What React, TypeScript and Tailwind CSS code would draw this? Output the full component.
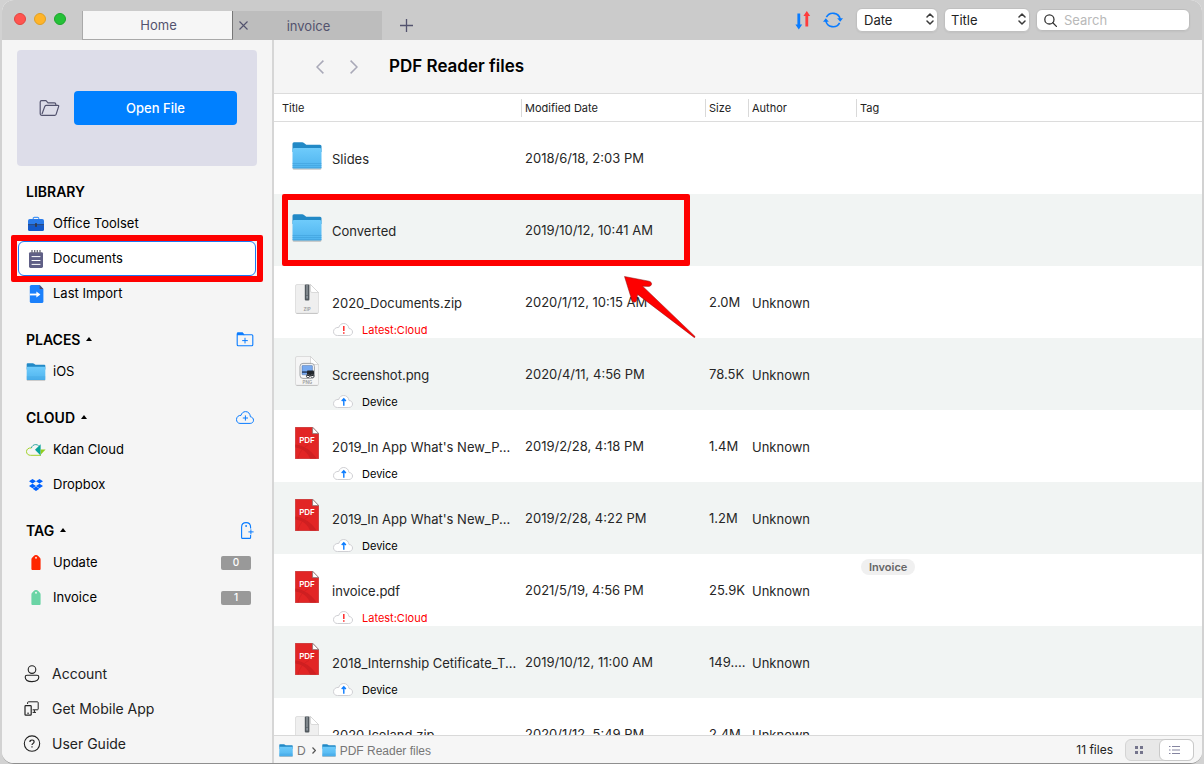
import { useState } from "react";
import type { ReactNode } from "react";

type Kind = "folder" | "zip" | "png" | "pdf";

interface FileItem {
  kind: Kind;
  name: string;
  date: string;
  size?: string;
  author?: string;
  tag?: string;
  status?: "Device" | "Latest:Cloud";
  marked?: boolean;
}

const FILES: FileItem[] = [
  { kind: "folder", name: "Slides", date: "2018/6/18, 2:03 PM" },
  { kind: "folder", name: "Converted", date: "2019/10/12, 10:41 AM", marked: true },
  { kind: "zip", name: "2020_Documents.zip", date: "2020/1/12, 10:15 AM", size: "2.0M", author: "Unknown", status: "Latest:Cloud" },
  { kind: "png", name: "Screenshot.png", date: "2020/4/11, 4:56 PM", size: "78.5K", author: "Unknown", status: "Device" },
  { kind: "pdf", name: "2019_In App What's New_P...", date: "2019/2/28, 4:18 PM", size: "1.4M", author: "Unknown", status: "Device" },
  { kind: "pdf", name: "2019_In App What's New_P...", date: "2019/2/28, 4:22 PM", size: "1.2M", author: "Unknown", status: "Device" },
  { kind: "pdf", name: "invoice.pdf", date: "2021/5/19, 4:56 PM", size: "25.9K", author: "Unknown", tag: "Invoice", status: "Latest:Cloud" },
  { kind: "pdf", name: "2018_Internship Cetificate_T...", date: "2019/10/12, 11:00 AM", size: "149....", author: "Unknown", status: "Device" },
  { kind: "zip", name: "2020 Iceland.zip", date: "2020/1/12, 5:49 PM", size: "2.4M", author: "Unknown" },
];

const COLUMNS = ["Title", "Modified Date", "Size", "Author", "Tag"];

function FolderIcon({ className }: { className: string }) {
  return (
    <svg className={className} viewBox="0 0 30 28" aria-hidden="true">
      <defs>
        <linearGradient id="folderFront" x1="0" y1="0" x2="0" y2="1">
          <stop offset="0" stopColor="#6ecbfb" />
          <stop offset="1" stopColor="#4fb4ef" />
        </linearGradient>
      </defs>
      <rect x="0.6" y="25" width="28.8" height="2.8" rx="1.4" fill="#000" opacity="0.22" />
      <path d="M0.5 1.8Q0.5 0.3 2 0.3H10.2Q11.2 0.3 12 1L13.6 2.3Q14.2 2.8 15.2 2.8H28Q29.5 2.8 29.5 4.3V10H0.5Z" fill="#2289c6" />
      <path d="M0.5 7.5Q0.5 6 2 6H28Q29.5 6 29.5 7.5V25.2Q29.5 26.4 28.3 26.4H1.7Q0.5 26.4 0.5 25.2Z" fill="url(#folderFront)" />
      <path d="M0.5 21.5H29.5M0.5 23.5H29.5M0.5 25.6H29.5" stroke="#3a9bd6" strokeWidth="0.5" />
    </svg>
  );
}

function ZipIcon() {
  return (
    <svg className="h-[30px] w-6" viewBox="0 0 24 30" aria-hidden="true">
      <path d="M2 0.5H15.5L23.5 8.5V28Q23.5 29.5 22 29.5H2Q0.5 29.5 0.5 28V2Q0.5 0.5 2 0.5Z" fill="#efefef" stroke="#d9d9d9" strokeWidth="0.8" />
      <path d="M1.5 29.4H22.5" stroke="#bdbdbd" strokeWidth="0.8" />
      <path d="M15.5 0.5V7Q15.5 8.5 17 8.5H23.5Z" fill="#fff" stroke="#c6c6c6" strokeWidth="0.6" />
      <rect x="9.8" y="0.4" width="4.6" height="16" rx="1" fill="#51585e" />
      <path d="M11 2H13M11 4H13M11 6H13M11 8H13M11 10H13" stroke="#b7bec3" strokeWidth="0.9" />
      <rect x="11.2" y="11.6" width="1.8" height="3" fill="#89929a" />
      <text x="12" y="27.4" textAnchor="middle" fontSize="4.5" fontWeight="600" fill="#999">ZIP</text>
    </svg>
  );
}

function PngIcon() {
  return (
    <svg className="h-[30px] w-6" viewBox="0 0 24 30" aria-hidden="true">
      <path d="M2 0.5H15.5L23.5 8.5V28Q23.5 29.5 22 29.5H2Q0.5 29.5 0.5 28V2Q0.5 0.5 2 0.5Z" fill="#f5f5f5" stroke="#d6d6d6" strokeWidth="0.8" />
      <path d="M1.5 29.4H22.5" stroke="#b9b9b9" strokeWidth="0.8" />
      <path d="M15.5 0.5V7Q15.5 8.5 17 8.5H23.5Z" fill="#fff" stroke="#c6c6c6" strokeWidth="0.6" />
      <rect x="5" y="7.4" width="14.4" height="15" rx="3" fill="#fafafa" stroke="#8b8f93" strokeWidth="0.8" />
      <rect x="7" y="9.4" width="10.4" height="9.4" rx="0.6" fill="#78aaf0" stroke="#44679c" strokeWidth="0.5" />
      <path d="M7 15.2H12V17H7Z" fill="#35507b" />
      <rect x="12" y="14.6" width="7" height="5.4" rx="0.8" fill="#22262c" />
      <circle cx="13" cy="20" r="1.7" fill="none" stroke="#505459" strokeWidth="0.9" />
      <circle cx="17.4" cy="20" r="1.7" fill="none" stroke="#505459" strokeWidth="0.9" />
      <text x="12.4" y="27.6" textAnchor="middle" fontSize="4.5" fontWeight="600" fill="#999">PNG</text>
    </svg>
  );
}

function PdfIcon() {
  return (
    <svg className="h-8 w-6" viewBox="0 0 24 32" aria-hidden="true">
      <path d="M0.3 0.3H17.6L23.7 6.6V31.7H0.3Z" fill="#e22525" stroke="#b82222" strokeWidth="0.6" />
      <path d="M0.5 17.5C9 18.5 17 24 21.5 31.5H15C12.5 25.5 7.5 21.5 0.5 20.6Z" fill="#cf1f21" />
      <path d="M3 31.5C4 26 8 20 14 17.5" fill="none" stroke="#cf1f21" strokeWidth="0.7" />
      <path d="M17.6 0.3V6.6H23.7Z" fill="#fff" stroke="#777" strokeWidth="0.7" />
      <text x="12" y="16.2" textAnchor="middle" fontSize="8" fontWeight="600" fill="#fff">PDF</text>
    </svg>
  );
}

function FileIcon({ kind }: { kind: Kind }) {
  if (kind === "folder") return <FolderIcon className="mt-0.5 h-7 w-[30px]" />;
  if (kind === "zip") return <ZipIcon />;
  if (kind === "png") return <PngIcon />;
  return <PdfIcon />;
}

function StatusIcon({ cloud }: { cloud: boolean }) {
  return (
    <svg className="mb-0.5 h-[13px] w-5" viewBox="0 0 20 13" fill="none" aria-hidden="true">
      <path d="M4.4 12.5H15.8C18 12.5 19.5 11 19.5 9C19.5 7 18 5.6 16 5.5C15.6 2.6 13.6 0.5 10.8 0.5C8.2 0.5 6.4 2 5.8 4.4C3 4.2 0.5 5.8 0.5 8.7C0.5 11 2.2 12.5 4.4 12.5Z" fill="#fff" stroke="#cfcfd3" />
      {cloud ? (
        <path d="M10.8 3V8M10.8 9.2V10.8" stroke="#ff2a2a" strokeWidth="1.5" />
      ) : (
        <path d="M10.8 10.8V4M8.7 6L10.8 3.8L12.9 6" stroke="#0a7cff" strokeWidth="1.4" />
      )}
    </svg>
  );
}

function ToolsetIcon() {
  return (
    <svg className="h-4 w-4" viewBox="0 0 16 16" aria-hidden="true">
      <path d="M5.2 3.6V2.4Q5.2 1.4 6.2 1.4H9.8Q10.8 1.4 10.8 2.4V3.6" fill="none" stroke="#4a97f5" strokeWidth="1.1" />
      <rect x="0" y="3" width="16" height="12" rx="1.8" fill="#2a7bea" />
      <path d="M0 9.4H16V13.2Q16 15 14.2 15H1.8Q0 15 0 13.2Z" fill="#1459c9" />
      <path d="M0 8.8H16" stroke="#273a63" strokeWidth="1" />
      <rect x="7" y="7.2" width="2" height="3.6" fill="#333b50" />
    </svg>
  );
}

function DocumentsIcon() {
  return (
    <svg className="h-[18px] w-4" viewBox="0 0 16 18" aria-hidden="true">
      <rect x="1" y="2.2" width="14" height="15.8" rx="1.4" fill="#5f5f86" />
      <path d="M4 0V3.5M6.7 0V3.5M9.3 0V3.5M12 0V3.5" stroke="#6b6b78" strokeWidth="1.3" />
      <path d="M3.6 6.6H12.4M3.6 10.5H12.4M3.6 14.4H12.4" stroke="#fff" strokeWidth="1" />
    </svg>
  );
}

function ImportIcon() {
  return (
    <svg className="h-[18px] w-4" viewBox="0 0 16 18" aria-hidden="true">
      <path d="M3.4 0H11.6L15.4 4V16.4Q15.4 18 13.8 18H3.4Q1.8 18 1.8 16.4V1.6Q1.8 0 3.4 0Z" fill="#1b80fb" />
      <path d="M11.6 0L15.4 4H11.6Z" fill="#4a4a72" />
      <path d="M1.8 9.5H10.4" stroke="#fff" strokeWidth="1.8" />
      <path d="M8.4 6.4L12.4 9.5L8.4 12.6Z" fill="#fff" />
    </svg>
  );
}

function KdanIcon() {
  return (
    <svg className="h-3 w-5" viewBox="0 0 20 12" fill="none" aria-hidden="true">
      <path d="M5.4 4C2.6 3.6 0.5 5.2 0.5 7.6C0.5 9.8 2.2 11.3 4.6 11.3H15" stroke="#a2d129" />
      <path d="M5.4 4C6 1.8 7.6 0.6 9.8 0.6C10.8 0.6 11.8 1 12.6 1.6" stroke="#2fa8a0" />
      <path d="M9 5.7L14.6 0.2V11.4Z" fill="#08a39a" />
      <path d="M14.6 5.6H19.6L14.6 10.8Z" fill="#8fce1e" />
    </svg>
  );
}

function DropboxIcon() {
  return (
    <svg className="h-3 w-4" viewBox="0 0 16 12" fill="#0061fe" aria-hidden="true">
      <path d="M4.5 0L8 2.3L4.5 4.6L1 2.3ZM11.5 0L15 2.3L11.5 4.6L8 2.3ZM4.5 4.7L8 7L4.5 9.3L1 7ZM11.5 4.7L15 7L11.5 9.3L8 7ZM8 7.4L11.4 9.8L8 12L4.6 9.8Z" />
    </svg>
  );
}

function TagIcon({ color }: { color: string }) {
  return (
    <svg className="h-[15px] w-[10px]" viewBox="0 0 10 15" aria-hidden="true">
      <path d="M0.4 4.4Q0.4 3.4 1.1 2.7L3 0.8Q3.8 0 4.6 0H5.4Q6.2 0 7 0.8L8.9 2.7Q9.6 3.4 9.6 4.4V14Q9.6 15 8.6 15H1.4Q0.4 15 0.4 14Z" fill={color} />
      <circle cx="5" cy="2.8" r="1" fill="#fff" opacity="0.85" />
    </svg>
  );
}

function AddFolderIcon() {
  return (
    <svg className="h-[15px] w-[18px]" viewBox="0 0 18 15" fill="none" stroke="#0a7cff" aria-hidden="true">
      <path d="M1.6 1H6.4L8 2.8H15.8Q16.8 2.8 16.8 3.8V12.8Q16.8 13.8 15.8 13.8H2.2Q1.2 13.8 1.2 12.8V1.4" strokeWidth="1.1" />
      <path d="M1 0.6H6.6L8.4 3.2H1Z" fill="#0a7cff" stroke="none" />
      <path d="M9 5.8V11.4M6.2 8.6H11.8" />
    </svg>
  );
}

function AddCloudIcon() {
  return (
    <svg className="h-[13px] w-[18px]" viewBox="0 0 18 13" fill="none" stroke="#0a7cff" aria-hidden="true">
      <path d="M4 12.4H14.2C16.2 12.4 17.5 11 17.5 9.2C17.5 7.4 16.2 6 14.4 5.8C14.2 2.8 12.4 0.6 9.6 0.6C7.2 0.6 5.6 2.2 5 4.4C2.6 4.2 0.5 5.8 0.5 8.6C0.5 10.8 2 12.4 4 12.4Z" />
      <path d="M9.4 4.4V9.6M6.8 7H12" />
    </svg>
  );
}

function AddTagIcon() {
  return (
    <svg className="h-[17px] w-[14px]" viewBox="0 0 14 17" fill="none" stroke="#0a7cff" aria-hidden="true">
      <path d="M10.6 13V15.4Q10.6 16.4 9.6 16.4H2.6Q1.6 16.4 1.6 15.4V5.2Q1.6 0.6 6.1 0.6Q10.6 0.6 10.6 5.2V6.6" strokeWidth="1.1" />
      <circle cx="6.1" cy="4" r="0.9" fill="#0a7cff" stroke="none" />
      <path d="M10.9 7.4V12.4M8.4 9.9H13.6" />
    </svg>
  );
}

function AccountIcon() {
  return (
    <svg className="h-[18px] w-[18px]" viewBox="0 0 18 18" fill="none" stroke="#222" aria-hidden="true">
      <circle cx="9" cy="4.6" r="3.8" strokeWidth="1.1" />
      <path d="M4 10.2H14Q15.8 10.2 15.8 12Q15.8 16.6 9 16.6Q2.2 16.6 2.2 12Q2.2 10.2 4 10.2Z" strokeWidth="1.1" />
    </svg>
  );
}

function MobileIcon() {
  return (
    <svg className="h-[18px] w-[18px]" viewBox="0 0 18 18" fill="none" stroke="#222" aria-hidden="true">
      <path d="M4.6 4V2.6Q4.6 1.8 5.4 1.8H14.4Q15.2 1.8 15.2 2.6V9Q15.2 9.8 14.4 9.8H9.6M11.4 10V12.2M9.6 12.4H13" />
      <rect x="2" y="5.6" width="6.2" height="9.6" rx="0.8" strokeWidth="1.2" />
      <path d="M4.2 13.2H6" />
    </svg>
  );
}

function HelpIcon() {
  return (
    <svg className="h-[18px] w-[18px]" viewBox="0 0 18 18" fill="none" stroke="#222" aria-hidden="true">
      <circle cx="9" cy="8.6" r="7.7" strokeWidth="1.1" />
      <path d="M6.9 7.1Q6.9 5 9 5Q11.1 5 11.1 6.8Q11.1 7.8 10 8.5Q9 9.1 9 10.1M9 11.2V12.5" strokeWidth="1.2" />
    </svg>
  );
}

function UpDown() {
  return (
    <svg className="pointer-events-none absolute top-1 right-1 h-[14px] w-2" viewBox="0 0 8 14" fill="none" stroke="#3a3a3a" strokeWidth="1.5" strokeLinecap="round" strokeLinejoin="round" aria-hidden="true">
      <path d="M1 5L4 2L7 5M1 9L4 12L7 9" />
    </svg>
  );
}

interface SectionProps {
  title: string;
  action?: ReactNode;
  actionLabel?: string;
  collapsible?: boolean;
  children: ReactNode;
}

function Section({ title, action, actionLabel, collapsible, children }: SectionProps) {
  return (
    <section className="mb-[13px]">
      <div className="flex h-[30px] items-center pr-[3px] pl-[9px]">
        <h2 className="pt-px text-sm font-semibold text-black">{title}</h2>
        {collapsible && (
          <svg className="ml-1.5 h-1 w-1.5" viewBox="0 0 6 4" aria-hidden="true">
            <path d="M3 0L6 4H0Z" fill="#000" />
          </svg>
        )}
        {action && (
          <button className="ml-auto" aria-label={actionLabel}>
            {action}
          </button>
        )}
      </div>
      <ul>{children}</ul>
    </section>
  );
}

interface NavItemProps {
  icon: ReactNode;
  label: string;
  count?: number;
  active?: boolean;
}

function NavItem({ icon, label, count, active }: NavItemProps) {
  return (
    <li className="relative px-px">
      <button
        className={`flex h-[35px] w-full items-center rounded-md border pl-[7px] text-left text-[13px] text-black ${
          active ? "border-[#1a78f5] bg-white" : "border-transparent"
        }`}
      >
        <span className="mr-[7px] flex w-5 justify-center">{icon}</span>
        {label}
        {count !== undefined && (
          <span className="mr-1 ml-auto flex h-[14px] w-[30px] items-center justify-center rounded-xs bg-[#999] text-[10px] font-medium text-white">
            {count}
          </span>
        )}
      </button>
      {active && <span className="pointer-events-none absolute -inset-1.5 z-10 rounded-xs border-[6px] border-[#fe0000]" />}
    </li>
  );
}

function FooterLink({ icon, label }: { icon: ReactNode; label: string }) {
  return (
    <a href="#" className="flex h-[35px] items-center gap-[11px] pl-[6px] text-sm text-[#222]">
      {icon}
      {label}
    </a>
  );
}

function TitleBar() {
  return (
    <header className="flex h-10 shrink-0 bg-[#cbcbcb]">
      <div className="flex w-20 gap-2 pt-[13px] pl-3">
        <button aria-label="Close" className="h-3 w-3 rounded-full border border-[#e2453f] bg-[#ff5450]" />
        <button aria-label="Minimize" className="h-3 w-3 rounded-full border border-[#dfa023] bg-[#ffb429]" />
        <button aria-label="Zoom" className="h-3 w-3 rounded-full border border-[#1ba52c] bg-[#25c138]" />
      </div>
      <nav className="flex items-end text-[13px] text-[#53536e]">
        <button className="h-[29px] w-[151px] border border-t-0 border-[#a9a9a9] border-r-[#777] bg-[#f6f6f6] pt-0.5 pl-0.5">Home</button>
        <div className="flex h-[29px] w-[149px] items-center bg-[#bdbdbd]">
          <button aria-label="Close tab" className="w-5 pl-1.5">
            <svg className="h-[9px] w-[9px]" viewBox="0 0 9 9" stroke="#53536e" strokeWidth="1.1" aria-hidden="true">
              <path d="M0.5 0.5L8.5 8.5M8.5 0.5L0.5 8.5" />
            </svg>
          </button>
          <button className="flex-1 pt-0.5 pr-[18px]">invoice</button>
        </div>
        <button aria-label="New tab" className="flex h-[29px] w-12 items-center justify-center">
          <svg className="h-[13px] w-[13px]" viewBox="0 0 13 13" stroke="#53536e" strokeWidth="1.3" aria-hidden="true">
            <path d="M6.5 0V13M0 6.5H13" />
          </svg>
        </button>
      </nav>
      <div className="ml-auto flex h-10 items-center gap-1.5 pr-3 text-[13px] text-[#222]">
        <button aria-label="Sort direction">
          <svg className="h-5 w-4" viewBox="0 0 16 20" aria-hidden="true">
            <path d="M2.4 3.6H5.2V14.6H7.2L3.8 19.6L0.4 14.6H2.4Z" fill="#0a7cff" />
            <path d="M10.4 16.4V6H8.4L11.8 1L15.2 6H13.2V16.4Z" fill="#ff3c3c" />
          </svg>
        </button>
        <button aria-label="Refresh" className="mr-[7px] ml-1.5">
          <svg className="h-[18px] w-5" viewBox="0 0 20 18" fill="none" stroke="#0a7cff" strokeWidth="1.6" aria-hidden="true">
            <path d="M3.4 6.2A7.4 7.4 0 0 1 17.2 8.4M16.6 11.8A7.4 7.4 0 0 1 2.8 9.6" />
            <path d="M14.2 7.2H20L17.2 10.8ZM0 10.8H5.8L2.8 7.2Z" fill="#0a7cff" stroke="none" />
          </svg>
        </button>
        <div className="relative">
          <select aria-label="Sort by" className="block h-6 w-[82px] appearance-none rounded-md border border-[#c0c0c0] bg-white pt-0.5 pl-[7px] shadow-xs">
            <option>Date</option>
          </select>
          <UpDown />
        </div>
        <div className="relative">
          <select aria-label="Show" className="block h-6 w-[86px] appearance-none rounded-md border border-[#c0c0c0] bg-white pt-0.5 pl-1.5 shadow-xs">
            <option>Title</option>
          </select>
          <UpDown />
        </div>
        <div className="relative">
          <svg className="absolute top-[5px] left-2 h-[13px] w-[13px]" viewBox="0 0 13 13" fill="none" stroke="#333" strokeWidth="1.3" aria-hidden="true">
            <circle cx="5.4" cy="5.4" r="4.6" />
            <path d="M8.8 8.8L12.4 12.4" strokeLinecap="round" />
          </svg>
          <input
            type="search"
            aria-label="Search"
            placeholder="Search"
            className="block h-[22px] w-[154px] rounded-md border border-[#bdbdbd] bg-white pl-[27px] shadow-xs placeholder:text-[#b9b9b9]"
          />
        </div>
      </div>
    </header>
  );
}

function Sidebar() {
  return (
    <aside className="flex w-[272px] shrink-0 flex-col border-r-2 border-[#d6d6d6] bg-[#f5f5f5] px-[15px] pt-2.5 pb-0.5">
      <div className="mb-2.5 flex h-[116px] shrink-0 items-center rounded-sm bg-[#dddde9] pr-5 pl-[22px]">
        <svg className="mr-3.5 h-[18px] w-[21px]" viewBox="0 0 21 18" fill="none" stroke="#53536e" strokeWidth="1.2" strokeLinejoin="round" aria-hidden="true">
          <path d="M3 16.4Q1.2 16.4 1.2 14.6V3Q1.2 1.6 2.6 1.6H7L9 3.8H15.4Q16.8 3.8 16.8 5.2V6.4" />
          <path d="M3 16.4H15.6Q16.8 16.4 17.1 15.4L19.6 7.6Q20 6.4 18.8 6.4H7.4Q6.2 6.4 5.8 7.4L3 15" />
        </svg>
        <button className="h-[34px] flex-1 rounded-sm bg-[#0080ff] pt-0.5 text-[13px] font-medium text-white">Open File</button>
      </div>

      <Section title="LIBRARY">
        <NavItem icon={<ToolsetIcon />} label="Office Toolset" />
        <NavItem icon={<DocumentsIcon />} label="Documents" active />
        <NavItem icon={<ImportIcon />} label="Last Import" />
      </Section>
      <Section title="PLACES" collapsible action={<AddFolderIcon />} actionLabel="Add place">
        <NavItem icon={<FolderIcon className="h-[18px] w-5" />} label="iOS" />
      </Section>
      <Section title="CLOUD" collapsible action={<AddCloudIcon />} actionLabel="Add cloud">
        <NavItem icon={<KdanIcon />} label="Kdan Cloud" />
        <NavItem icon={<DropboxIcon />} label="Dropbox" />
      </Section>
      <Section title="TAG" collapsible action={<AddTagIcon />} actionLabel="Add tag">
        <NavItem icon={<TagIcon color="#ff2600" />} label="Update" count={0} />
        <NavItem icon={<TagIcon color="#6ad4a5" />} label="Invoice" count={1} />
      </Section>

      <div className="mt-auto">
        <FooterLink icon={<AccountIcon />} label="Account" />
        <FooterLink icon={<MobileIcon />} label="Get Mobile App" />
        <FooterLink icon={<HelpIcon />} label="User Guide" />
      </div>
    </aside>
  );
}

function FileRow({ file }: { file: FileItem }) {
  const isCloud = file.status === "Latest:Cloud";
  return (
    <tr className="h-18 even:bg-[#f1f4f3]">
      <td className="p-0">
        <div className="relative flex h-18 gap-[9px] pl-[17px]">
          <span className="flex w-8 items-center justify-center pb-1.5">
            <FileIcon kind={file.kind} />
          </span>
          <div className="pt-7 whitespace-nowrap">
            <p className="leading-[18px]">{file.name}</p>
            {file.status && (
              <p className={`mt-[10px] ml-px flex items-center gap-[9px] text-[11px] leading-4 ${isCloud ? "text-[#fe0000]" : "text-black"}`}>
                <StatusIcon cloud={isCloud} />
                {file.status}
              </p>
            )}
          </div>
          {file.marked && (
            <>
              <span className="pointer-events-none absolute top-0 left-2 h-18 w-[408px] rounded-xs border-[6px] border-[#fe0000]" />
              <svg className="pointer-events-none absolute top-[82px] left-[350px] z-10 h-[62px] w-[72px]" viewBox="0 0 72 62" aria-hidden="true">
                <path d="M0.5 0.5L25 5.2C29 6.2 28 10.4 24.6 10.4L18.6 10.2L71 60.4C71.4 61.4 70.6 61.8 69.8 61.2L13.6 18.4L12.6 24.2C12 27 8.6 26.6 7.8 24Z" fill="#fe0000" stroke="#8a1010" strokeWidth="0.5" />
              </svg>
            </>
          )}
        </div>
      </td>
      <td className="pt-0.5 pr-0 pb-0 pl-1 whitespace-nowrap">{file.date}</td>
      <td className="pt-0.5 pr-0 pb-0 pl-1 whitespace-nowrap">{file.size}</td>
      <td className="pt-1 pr-0 pb-0 pl-1">{file.author}</td>
      <td className="px-[5px] pt-[5px] pb-0 align-top">
        {file.tag && (
          <span className="block w-fit rounded-full bg-[#f0f0f0] px-2 text-[11px] leading-4 font-semibold text-[#666]">{file.tag}</span>
        )}
      </td>
    </tr>
  );
}

function StatusBar() {
  const [view, setView] = useState("list");
  return (
    <footer className="flex h-7 shrink-0 items-center border-t border-[#d9d9d9] bg-[#f6f6f6] pr-2 pl-[5px] text-xs text-[#777]">
      <div className="flex items-center pt-0.5 font-['Liberation_Sans',sans-serif]">
        <FolderIcon className="mr-1 h-[13px] w-[14px]" />
        D
        <svg className="mx-1.5 h-[7px] w-1" viewBox="0 0 4 7" fill="none" stroke="#555" strokeWidth="1.2" aria-hidden="true">
          <path d="M0.5 0.5L3.4 3.5L0.5 6.5" />
        </svg>
        <FolderIcon className="mr-1 h-[13px] w-[14px]" />
        PDF Reader files
      </div>
      <span className="mr-3 ml-auto text-[#222]">11 files</span>
      <div className="flex h-[22px] w-[69px] rounded-md border border-[#d4d4d4] bg-[#e8e8e8]">
        <button aria-label="Grid view" onClick={() => setView("grid")} aria-pressed={view === "grid"} className="flex flex-1 items-center justify-center pr-2">
          <svg className="h-2 w-2" viewBox="0 0 8 8" fill="#74748c" aria-hidden="true">
            <path d="M0 0H3V3H0ZM5 0H8V3H5ZM0 5H3V8H0ZM5 5H8V8H5Z" />
          </svg>
        </button>
        <button aria-label="List view" onClick={() => setView("list")} aria-pressed={view === "list"} className="-my-px -mr-px flex w-[35px] items-center justify-center rounded-md border border-[#c9c9c9] bg-white pr-1">
          <svg className="h-2 w-[11px]" viewBox="0 0 11 8" stroke="#8585a0" aria-hidden="true">
            <path d="M0 0.5H1.5M3 0.5H11M0 4H1.5M3 4H11M0 7.5H1.5M3 7.5H11" />
          </svg>
        </button>
      </div>
    </footer>
  );
}

export default function App() {
  return (
    <div className="h-screen bg-[#d2d2d2] px-0.5 font-['Inter',sans-serif]">
      <div className="flex h-full flex-col overflow-hidden rounded-xl border-b border-[#8f8f8f] bg-white">
        <TitleBar />
        <div className="flex min-h-0 flex-1">
          <Sidebar />
          <main className="flex min-w-0 flex-1 flex-col">
            <div className="flex h-[54px] shrink-0 items-center border-b border-[#dcdcdc] bg-[#f5f5f5] pl-[42px]">
              <button aria-label="Back" className="mr-[26px]">
                <svg className="h-[14px] w-2" viewBox="0 0 8 14" fill="none" stroke="#a9a9b8" strokeWidth="1.5" aria-hidden="true">
                  <path d="M7.4 0.6L1 7L7.4 13.4" />
                </svg>
              </button>
              <button aria-label="Forward" className="mr-[31px]">
                <svg className="h-[14px] w-2" viewBox="0 0 8 14" fill="none" stroke="#a9a9b8" strokeWidth="1.5" aria-hidden="true">
                  <path d="M0.6 0.6L7 7L0.6 13.4" />
                </svg>
              </button>
              <h1 className="text-[17px] font-semibold text-black">PDF Reader files</h1>
            </div>
            <div className="min-h-0 flex-1 overflow-hidden">
              <table className="w-full table-fixed border-collapse text-[13px] text-[#262626]">
                <colgroup>
                  <col className="w-[247px]" />
                  <col className="w-[184px]" />
                  <col className="w-[43px]" />
                  <col className="w-[108px]" />
                  <col />
                </colgroup>
                <thead>
                  <tr className="h-7 text-left text-[11px] text-[#222] shadow-[inset_0_-1px_0_#dcdcdc]">
                    {COLUMNS.map((name, index) => (
                      <th key={name} scope="col" className="p-0 font-normal">
                        <div className={index === 0 ? "pl-2" : "h-[18px] border-l border-[#d9d9d9] pl-[3px] leading-[18px] whitespace-nowrap"}>{name}</div>
                      </th>
                    ))}
                  </tr>
                </thead>
                <tbody>
                  {FILES.map((file, index) => (
                    <FileRow key={index} file={file} />
                  ))}
                </tbody>
              </table>
            </div>
            <StatusBar />
          </main>
        </div>
      </div>
    </div>
  );
}
